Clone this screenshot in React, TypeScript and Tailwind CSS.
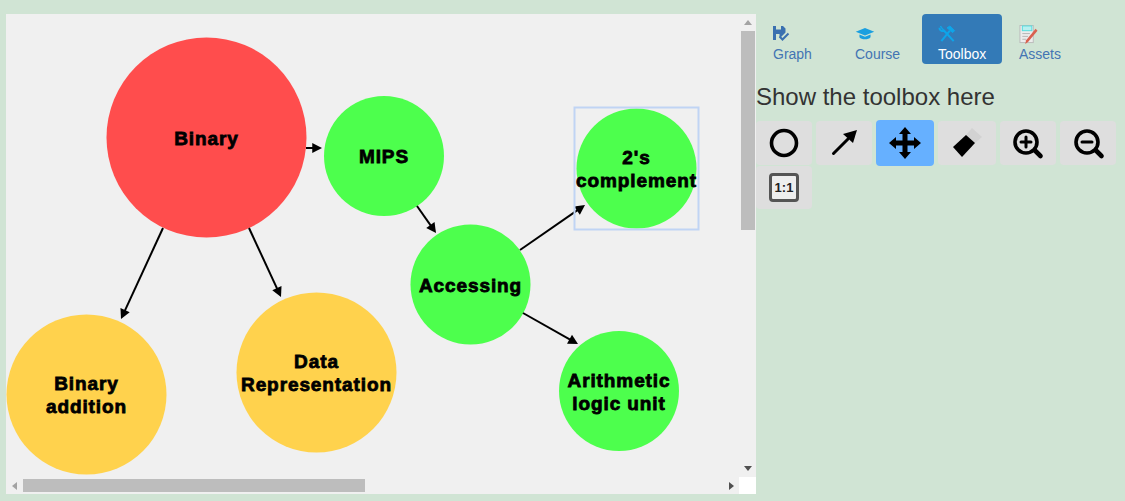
const SANS = "[font-family:'Liberation_Sans',Arial,sans-serif]";

const nodes = [
  { cx: 206.5, cy: 137.5, r: 100, fill: "#ff4d4d", lines: [["Binary", 145]] },
  { cx: 384, cy: 156, r: 60, fill: "#4dff4d", lines: [["MIPS", 163]] },
  { cx: 636.5, cy: 168.5, r: 60, fill: "#4dff4d", lines: [["2's", 164], ["complement", 187]] },
  { cx: 470.5, cy: 284.5, r: 60, fill: "#4dff4d", lines: [["Accessing", 292]] },
  { cx: 619, cy: 391, r: 60, fill: "#4dff4d", lines: [["Arithmetic", 387], ["logic unit", 410]] },
  { cx: 316.5, cy: 372.5, r: 80, fill: "#ffd24d", lines: [["Data", 368], ["Representation", 391]] },
  { cx: 86.5, cy: 394.5, r: 80, fill: "#ffd24d", lines: [["Binary", 390], ["addition", 413]] },
] as const;

const edges = [
  [306, 148, 322, 148],
  [163, 228, 121, 319],
  [249, 228, 281, 297],
  [417, 206, 436, 233],
  [520, 250, 585, 205],
  [523, 313, 578, 344],
];

function Arrow({ edge }: { edge: number[] }) {
  const [x1, y1, x2, y2] = edge;
  const a = Math.atan2(y2 - y1, x2 - x1);
  const len = 11;
  const spread = 0.48;
  const p1 = [x2 - len * Math.cos(a - spread), y2 - len * Math.sin(a - spread)];
  const p2 = [x2 - len * Math.cos(a + spread), y2 - len * Math.sin(a + spread)];
  return (
    <g>
      <line x1={x1} y1={y1} x2={x2 - 6 * Math.cos(a)} y2={y2 - 6 * Math.sin(a)} stroke="#000" strokeWidth={2} />
      <polygon points={`${x2},${y2} ${p1.join(",")} ${p2.join(",")}`} fill="#000" />
    </g>
  );
}

function Graph() {
  return (
    <svg width={733} height={463} viewBox="6 14 733 463" className="block">
      {nodes.map((n) => (
        <circle key={n.cx} cx={n.cx} cy={n.cy} r={n.r} fill={n.fill} />
      ))}
      {edges.map((e) => (
        <Arrow key={e.join()} edge={e} />
      ))}
      <rect x={574.5} y={107.5} width={124} height={122} fill="none" stroke="#c0d4f4" strokeWidth={2} />
      {nodes.map((n) =>
        n.lines.map(([label, y]) => (
          <text
            key={label + y}
            x={n.cx}
            y={y}
            textAnchor="middle"
            stroke="#000"
            strokeWidth={0.8}
            className={`${SANS} text-[19px] font-bold tracking-[0.9px]`}
          >
            {label}
          </text>
        )),
      )}
    </svg>
  );
}

function Triangle({ dir, color }: { dir: "up" | "down" | "left" | "right"; color: string }) {
  const pts = {
    up: "0,6 8,6 4,1",
    down: "0,2 8,2 4,7",
    left: "6,0 6,8 1,4",
    right: "2,0 2,8 7,4",
  }[dir];
  return (
    <svg width={8} height={8} viewBox="0 0 8 8" className="block">
      <polygon points={pts} fill={color} />
    </svg>
  );
}

function Canvas() {
  return (
    <div className="mt-[14px] grid h-[480px] w-[750px] shrink-0 grid-cols-[733px_17px] grid-rows-[463px_17px] bg-[#f0f0f0]">
      <div className="overflow-hidden">
        <Graph />
      </div>
      <div className="flex flex-col items-center">
        <div className="flex h-[17px] items-center justify-center">
          <Triangle dir="up" color="#a3a3a3" />
        </div>
        <div className="h-[199px] w-[14px] bg-[#bdbdbd]" />
        <div className="flex-1" />
        <div className="flex h-[17px] items-center justify-center pb-[2px]">
          <Triangle dir="down" color="#505050" />
        </div>
      </div>
      <div className="flex items-center">
        <div className="flex w-[17px] justify-center">
          <Triangle dir="left" color="#a3a3a3" />
        </div>
        <div className="h-[13px] w-[342px] bg-[#bdbdbd]" />
        <div className="flex-1" />
        <div className="flex w-[17px] justify-center">
          <Triangle dir="right" color="#505050" />
        </div>
      </div>
      <div className="bg-white" />
    </div>
  );
}

function GraphIcon() {
  return (
    <svg width={17} height={16} viewBox="0 0 17 16" className="block">
      <path d="M0 0H3V3.5H8V0H10L12.5 2.5V6.5L8 11H6.5V8H3V14H0Z" fill="#3a70b0" />
      <path d="M6.5 10.5L9.5 13.5L15.5 7.5" fill="none" stroke="#3a70b0" strokeWidth={2} />
    </svg>
  );
}

function CapIcon() {
  return (
    <svg width={20} height={13} viewBox="0 0 20 13" className="block">
      <path d="M0 4L10 0L20 4L10 8Z" fill="#1a9fe0" />
      <path d="M4 7L10 9.5L16 7V10C14 13 6 13 4 10Z" fill="#1a9fe0" />
    </svg>
  );
}

function ToolsIcon() {
  return (
    <svg width={19} height={19} viewBox="0 0 19 19" className="block" fill="none" stroke="#0ea5e9" strokeWidth={2.2}>
      <path d="M1 3C1 6 4 7 6 6L16 17" />
      <path d="M2 1C3 3 4 4 6 6" strokeWidth={1.5} />
      <path d="M3 17L12 6" />
      <path d="M9 3L12 1L17 6L15 8Z" fill="#0ea5e9" strokeWidth={1} />
    </svg>
  );
}

function AssetsIcon() {
  return (
    <svg width={19} height={20} viewBox="0 0 19 20" className="block">
      <rect x={0.5} y={0.5} width={14} height={18} fill="#ececec" stroke="#bbb" />
      <rect x={3} y={1} width={10} height={5} fill="#b8f0f0" stroke="#52dede" />
      <path d="M3 9H11M3 12H9M3 15H7" stroke="#b5b5b5" />
      <path d="M17 4L19 6L9 18L6 20L7 16Z" fill="#d9604f" />
    </svg>
  );
}

function Tabs() {
  return (
    <div className="flex h-[50px] items-start text-[14px] leading-[20px]">
      <div className="flex h-[50px] w-[84px] flex-col pl-[17px] pt-[12px] text-[#4374b3]">
        <GraphIcon />
        <span className="mt-[2px]">Graph</span>
      </div>
      <div className="flex h-[50px] w-[82px] flex-col pl-[15px] pt-[14px] text-[#4374b3]">
        <CapIcon />
        <span className="mt-[4px]">Course</span>
      </div>
      <div className="flex h-[50px] w-[80px] flex-col rounded-[4px] bg-[#337ab7] pl-[16px] pt-[11px] text-white">
        <ToolsIcon />
        <span className="mt-[1px]">Toolbox</span>
      </div>
      <div className="flex h-[50px] flex-col pl-[17px] pt-[11px] text-[#4374b3]">
        <AssetsIcon />
        <span>Assets</span>
      </div>
    </div>
  );
}

const icon = "block";

function ZoomIcon({ plus, cx }: { plus: boolean; cx: number }) {
  return (
    <svg width={56} height={44} viewBox="0 0 56 44" className={icon}>
      <circle cx={cx} cy={21} r={11} fill="none" stroke="#000" strokeWidth={3.6} />
      <path d={`M${cx + 9} 29.5L${cx + 14.5} 35`} stroke="#000" strokeWidth={4.6} strokeLinecap="round" />
      <path d={`M${cx - 5} 21H${cx + 5}`} stroke="#000" strokeWidth={3} strokeLinecap="round" />
      {plus && <path d={`M${cx} 16V26`} stroke="#000" strokeWidth={3} strokeLinecap="round" />}
    </svg>
  );
}

function Toolbar() {
  const btn = "flex items-center justify-center rounded-[4px]";
  const idle = "bg-[#dedede]";
  return (
    <div className="flex flex-wrap items-center gap-x-[4px]">
      <div className={`${btn} ${idle} h-[44px] w-[56px]`}>
        <svg width={56} height={44} viewBox="0 0 56 44" className={icon}>
          <circle cx={28} cy={22} r={12.5} fill="none" stroke="#000" strokeWidth={3.6} />
        </svg>
      </div>
      <div className={`${btn} ${idle} h-[44px] w-[56px]`}>
        <svg width={56} height={44} viewBox="0 0 56 44" className={icon}>
          <path d="M17.5 32.5L32 18" stroke="#000" strokeWidth={3} strokeLinecap="round" />
          <polygon points="41,9 37,22 27,13" fill="#000" />
        </svg>
      </div>
      <div className={`${btn} h-[46px] w-[58px] bg-[#66b0ff]`}>
        <svg width={58} height={46} viewBox="0 0 58 46" className={icon}>
          <path
            d="M29 7L35 14H31.5V20.5H38V17L45 23L38 29V25.5H31.5V32H35L29 39L23 32H26.5V25.5H20V29L13 23L20 17V20.5H26.5V14H23Z"
            fill="#000"
          />
        </svg>
      </div>
      <div className={`${btn} ${idle} h-[44px] w-[58px]`}>
        <svg width={58} height={44} viewBox="0 0 58 44" className={icon}>
          <polygon points="28,14 34,7 44,16 37,22" fill="#d2d2d2" />
          <polygon points="28,14 37,22 24,36 15,26" fill="#000" />
        </svg>
      </div>
      <div className={`${btn} ${idle} h-[44px] w-[56px]`}>
        <ZoomIcon plus cx={26} />
      </div>
      <div className={`${btn} ${idle} h-[44px] w-[56px]`}>
        <ZoomIcon plus={false} cx={27} />
      </div>
      <div className={`${btn} ${idle} h-[43px] w-[56px]`}>
        <div className="flex h-[29px] w-[30px] items-center justify-center rounded-[4px] border-[3px] border-[#555] bg-[#eee] text-[13px] font-bold leading-none text-[#222]">
          1:1
        </div>
      </div>
    </div>
  );
}

export default function App() {
  return (
    <div className={`flex h-[501px] w-[1125px] overflow-hidden bg-[#d0e4d4] pl-[6px] ${SANS}`}>
      <Canvas />
      <div className="mt-[14px] flex-1">
        <Tabs />
        <h3 className="mt-[20px] text-[24px] font-normal leading-[26px] text-[#333]">Show the toolbox here</h3>
        <div className="mt-[10px]">
          <Toolbar />
        </div>
      </div>
    </div>
  );
}
